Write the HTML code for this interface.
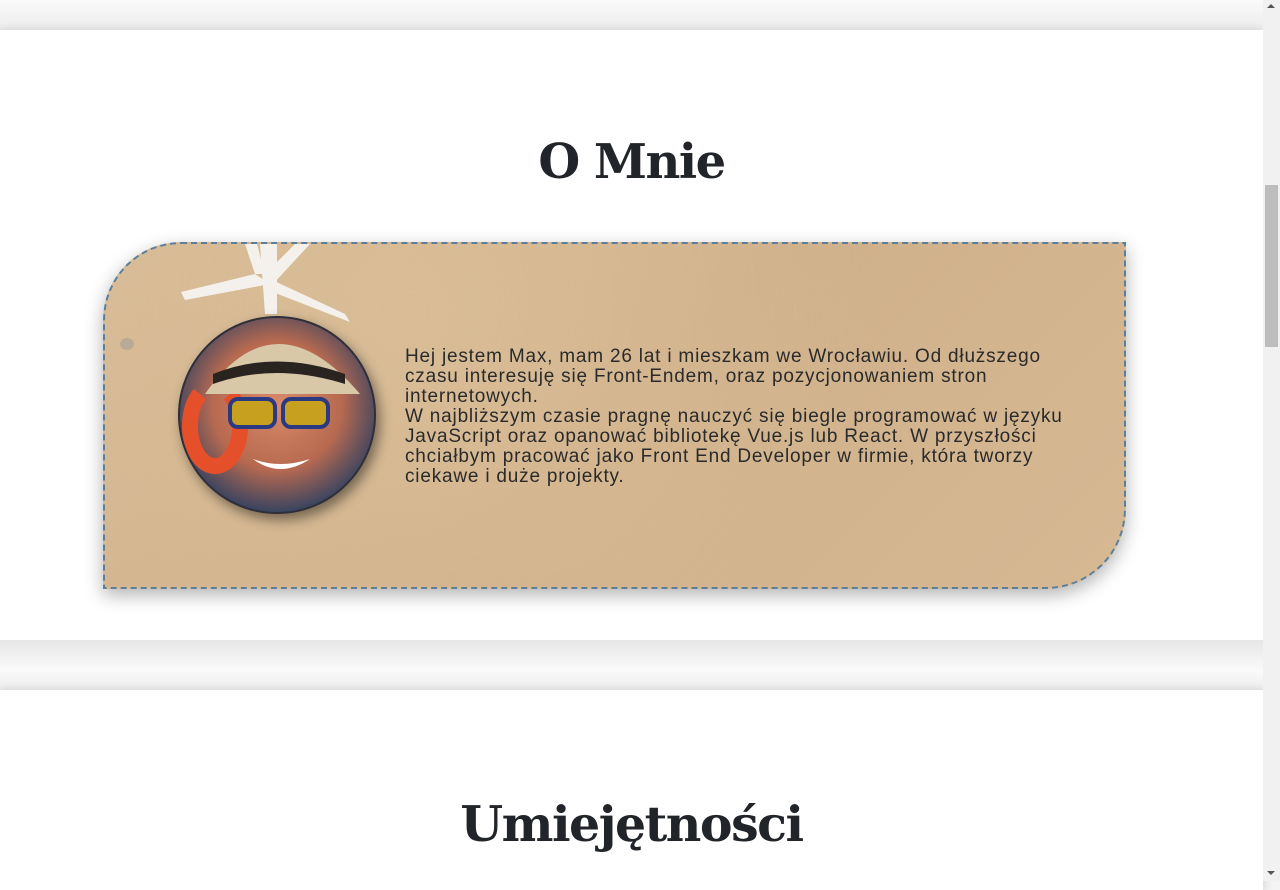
<!DOCTYPE html>
<html><head><meta charset="utf-8"><style>
html,body{margin:0;padding:0}
body{width:1280px;height:881px;overflow:hidden;background:#f4f4f4;font-family:"Liberation Sans",sans-serif;position:relative}
.page{position:absolute;left:0;top:0;width:1263px;height:881px;background:#f2f2f2}
.topgap{position:absolute;left:0;top:0;width:1263px;height:30px;background:linear-gradient(#fafafa,#ececec)}
.sec{position:absolute;left:0;width:1263px;background:#fff;box-shadow:0 2px 10px rgba(0,0,0,.18)}
.gap{position:absolute;left:0;top:640px;width:1263px;height:50px;background:linear-gradient(#e6e6e6,#fafafa 60%,#ededed)}
h2{position:absolute;left:0;width:1263px;text-align:center;margin:0;font-family:"DejaVu Serif","Liberation Serif",serif;font-weight:bold;font-size:49px;color:#212529;letter-spacing:-1.5px}
.box{position:absolute;left:103px;top:242px;width:1019px;height:343px;border:2px dashed #5b7f98;border-radius:78px 0 80px 0;
background:radial-gradient(circle at 30% 20%,#d9bd97,transparent 60%),linear-gradient(135deg,#d8bc98,#cfb08a 50%,#d6b994);box-shadow:0 6px 18px rgba(0,0,0,.3);overflow:hidden}
.txt{position:absolute;left:300px;top:103px;width:720px;font-size:19px;line-height:20px;color:#2a2a2a;letter-spacing:0.8px;white-space:nowrap}
.sb{position:absolute;left:1263px;top:0;width:17px;height:881px;background:#f1f1f1}
</style></head><body>
<div class="page">
<div class="topgap"></div>
<div class="sec" style="top:30px;height:610px"></div>
<div class="gap"></div>
<div class="sec" style="top:690px;height:200px"></div>
<h2 style="top:134px;font-size:48px">O Mnie</h2>
<div class="box">
<svg width="300" height="300" style="position:absolute;left:0;top:0">
<g fill="#f4f1ec">
<polygon points="155,0 172,0 172,70 160,70"/>
<polygon points="76,48 150,30 165,40 80,56"/>
<polygon points="165,35 240,70 245,78 160,45"/>
<polygon points="160,30 190,0 205,0 168,40"/>
<polygon points="150,30 140,0 152,0 160,30"/>
</g>
<ellipse cx="22" cy="100" rx="7" ry="6" fill="#b9aa95"/>
<defs><radialGradient id="f" cx="50%" cy="45%" r="55%"><stop offset="0" stop-color="#d98a6a"/><stop offset=".6" stop-color="#b86a50"/><stop offset="1" stop-color="#3a4460"/></radialGradient>
<clipPath id="c"><circle cx="172" cy="171" r="97"/></clipPath></defs>
<circle cx="172" cy="171" r="99" fill="#2f2f3a" style="filter:drop-shadow(4px 6px 6px rgba(0,0,0,.45))"/>
<circle cx="172" cy="171" r="97" fill="url(#f)"/>
<g clip-path="url(#c)">
<path d="M95,150 a25,40 0 1 0 30,0" fill="none" stroke="#e5502a" stroke-width="16"/>
<path d="M100,150 Q170,50 255,150 Z" fill="#d8c8a8"/>
<path d="M108,130 Q170,105 240,130 L240,140 Q170,118 108,140Z" fill="#2a2420"/>
<rect x="125" y="155" width="45" height="28" rx="8" fill="#c8a020" stroke="#2a3a80" stroke-width="4"/>
<rect x="178" y="155" width="45" height="28" rx="8" fill="#c8a020" stroke="#2a3a80" stroke-width="4"/>
<path d="M148,215 Q175,235 205,215 Q175,225 148,215Z" fill="#fff"/>
</g>
</svg>
<div class="txt">Hej jestem Max, mam 26 lat i mieszkam we Wrocławiu. Od dłuższego<br>czasu interesuję się Front-Endem, oraz pozycjonowaniem stron<br>internetowych.<br>W najbliższym czasie pragnę nauczyć się biegle programować w języku<br>JavaScript oraz opanować bibliotekę Vue.js lub React. W przyszłości<br>chciałbym pracować jako Front End Developer w firmie, która tworzy<br>ciekawe i duże projekty.</div>
</div>
<h2 style="top:795px">Umiejętności</h2>
</div>
<div class="sb"><div style="position:absolute;left:2px;top:185px;width:13px;height:162px;background:#bdbdbd"></div>
<div style="position:absolute;left:4px;top:4px;border:4px solid transparent;border-bottom:4px solid #555;border-top:0"></div>
<div style="position:absolute;left:4px;top:871px;border:4px solid transparent;border-top:4px solid #555;border-bottom:0"></div></div>
</body></html>
